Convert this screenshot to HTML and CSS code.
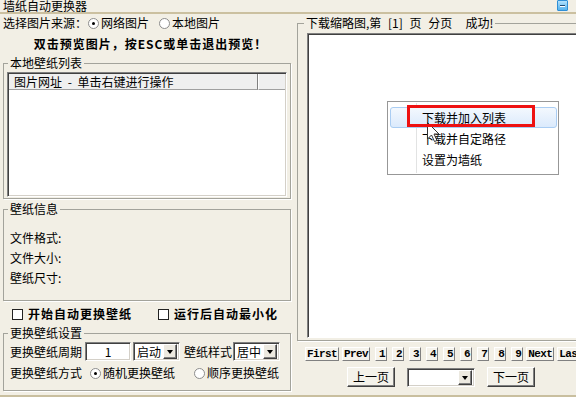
FILE: index.html
```html
<!DOCTYPE html>
<html lang="zh-CN">
<head>
    <meta charset="UTF-8">
    <title>墙纸自动更换器</title>
    <link rel="stylesheet" href="styles.css">
</head>
<body>
<div class="window">
    <div class="titlebar">
        <span class="title">墙纸自动更换器</span>
        <span class="min-btn"></span>
    </div>

    <div class="main">
        <div class="left">
            <div class="source-row">
                <span class="source-label">选择图片来源：</span>
                <span class="opt"><span class="radio on"></span>网络图片</span>
                <span class="opt"><span class="radio"></span>本地图片</span>
            </div>
            <div class="tip">双击预览图片，按ESC或单击退出预览！</div>

            <fieldset class="group list-group">
                <legend>本地壁纸列表</legend>
                <div class="listview">
                    <div class="list-head">
                        <div class="head-cell url-col">图片网址 - 单击右键进行操作</div>
                        <div class="head-cell"></div>
                    </div>
                </div>
            </fieldset>

            <fieldset class="group info-group">
                <legend>壁纸信息</legend>
                <p>文件格式:</p>
                <p>文件大小:</p>
                <p>壁纸尺寸:</p>
            </fieldset>

            <div class="check-row">
                <span class="check"><span class="box"></span>开始自动更换壁纸</span>
                <span class="check"><span class="box"></span>运行后自动最小化</span>
            </div>

            <fieldset class="group settings-group">
                <legend>更换壁纸设置</legend>
                <div class="set-row">
                    <span>更换壁纸周期</span>
                    <input class="period-input" type="text" value="1">
                    <span class="combo">启动<span class="drop"></span></span>
                    <span class="style-label">壁纸样式</span>
                    <span class="combo style-combo">居中<span class="drop"></span></span>
                </div>
                <div class="set-row">
                    <span>更换壁纸方式</span>
                    <span class="opt mode-opt"><span class="radio on"></span>随机更换壁纸</span>
                    <span class="opt mode-opt second"><span class="radio"></span>顺序更换壁纸</span>
                </div>
            </fieldset>
        </div>

        <div class="right">
            <fieldset class="group thumb-group">
                <legend>下载缩略图,第 [1] 页 分页  成功!</legend>
                <div class="thumb-view">
                    <div class="context-menu">
                        <div class="menu-item hover">下载并加入列表</div>
                        <div class="menu-item">下载并自定路径</div>
                        <div class="menu-item">设置为墙纸</div>
                        <div class="mark"></div>
                        <svg class="cursor" width="13" height="21" viewBox="0 0 13 21">
                            <path d="M0.5 0.5 V17 L4.5 13 L7.5 19.5 L10 18.5 L7 12 H12 Z" fill="#fff" stroke="#333" stroke-width="1"/>
                        </svg>
                    </div>
                </div>
            </fieldset>

            <div class="pager">
                <span>First</span>
                <span>Prev</span>
                <span class="num">1</span>
                <span class="num">2</span>
                <span class="num">3</span>
                <span class="num">4</span>
                <span class="num">5</span>
                <span class="num">6</span>
                <span class="num">7</span>
                <span class="num">8</span>
                <span class="num">9</span>
                <span>Next</span>
                <span>Last</span>
            </div>

            <div class="nav-row">
                <span class="nav-btn">上一页</span>
                <span class="nav-select"><span class="drop"></span></span>
                <span class="nav-btn">下一页</span>
            </div>
        </div>
    </div>
</div>
</body>
</html>
```

FILE: styles.css
```css
* {
    box-sizing: border-box;
}
body {
    margin: 0;
    font-family: "Noto Sans CJK SC", sans-serif;
    font-size: 12px;
    line-height: 12px;
    color: #000;
    background-color: #f2efe5;
}
.window {
    width: 576px;
    height: 397px;
    overflow: hidden;
    border-bottom: 2px solid #c9bf9f;
    display: flex;
    flex-direction: column;
}

/* title bar */
.titlebar {
    position: relative;
    height: 14px;
    padding-left: 3px;
    border-bottom: 2px solid #cbc0a0;
    flex-shrink: 0;
}
.titlebar .title {
    display: block;
}
.min-btn {
    position: absolute;
    left: 557px;
    top: 0;
    width: 11px;
    height: 11px;
    border: 1px solid #2f8fd6;
    border-radius: 1px;
    background: linear-gradient(#b3e1fb, #55b2ed);
}
.min-btn::after {
    content: "";
    position: absolute;
    left: 2px;
    top: 4px;
    width: 5px;
    height: 1px;
    background: #1f4a72;
    box-shadow: 0 1px #fff;
}

.main {
    display: flex;
    flex: 1;
    min-height: 0;
}
.left {
    width: 295px;
    flex-shrink: 0;
}
.right {
    flex: 1;
    overflow: hidden;
}

/* radios, checkboxes */
.opt {
    display: flex;
    align-items: center;
    gap: 2px;
}
.radio {
    position: relative;
    width: 11px;
    height: 11px;
    flex-shrink: 0;
    border: 1px solid #8d8d8d;
    border-radius: 50%;
    background: #fff;
}
.radio.on::after {
    content: "";
    position: absolute;
    left: 3px;
    top: 3px;
    width: 3px;
    height: 3px;
    border-radius: 50%;
    background: #000;
}
.box {
    width: 11px;
    height: 11px;
    flex-shrink: 0;
    border: 1px solid #222;
    background: #fff;
}

.source-row {
    display: flex;
    align-items: center;
    height: 12px;
    margin-top: 3px;
    padding-left: 3px;
}
.source-label {
    width: 85px;
}
.source-row .opt + .opt {
    margin-left: 10px;
}
.tip {
    margin-top: 9px;
    padding-left: 6px;
    text-align: center;
    font-weight: bold;
    letter-spacing: 1px;
}

/* group boxes */
.group {
    margin: 0 0 0 3px;
    width: 288px;
    min-width: 0;
    padding: 0 3px;
    border: 1px solid #a3a39b;
    box-shadow: 1px 1px 0 #fff;
}
.group legend {
    margin-left: 1px;
    padding: 0 2px;
    line-height: 12px;
}
.list-group {
    margin-top: 7px;
    padding-top: 3px;
    padding-bottom: 1px;
}
.listview {
    height: 125px;
    padding: 1px;
    background: #fff;
    border: 1px solid;
    border-color: #808080 #fff #fff #808080;
    box-shadow: inset 1px 1px #404040, inset -1px -1px #d4d0c8;
}
.list-head {
    display: flex;
    height: 16px;
}
.head-cell {
    flex: 1;
    padding-left: 5px;
    line-height: 15px;
    background: #efefef;
    border-bottom: 1px solid #a0a0a0;
    border-left: 1px solid #fff;
}
.head-cell.url-col {
    flex: none;
    width: 249px;
    border-left: 0;
    border-right: 1px solid #808080;
    word-spacing: 3px;
}

.info-group {
    margin-top: 4px;
    padding-top: 13px;
    padding-bottom: 12px;
}
.info-group p {
    margin: 0 0 0 3px;
    line-height: 20px;
}

.check-row {
    display: flex;
    align-items: center;
    height: 26px;
    padding-left: 12px;
    font-weight: bold;
    letter-spacing: 1px;
}
.check {
    display: flex;
    align-items: center;
    gap: 5px;
}
.check + .check {
    margin-left: 26px;
}

.settings-group {
    padding-top: 3px;
    padding-bottom: 8px;
}
.set-row {
    display: flex;
    align-items: center;
    height: 19px;
    padding-left: 3px;
}
.set-row + .set-row {
    height: 18px;
    margin-top: 3px;
}
.period-input {
    width: 46px;
    height: 19px;
    margin: 0 0 0 3px;
    padding: 0;
    font: inherit;
    text-align: center;
    background: #fff;
    border: 1px solid;
    border-color: #808080 #fff #fff #808080;
    box-shadow: inset 1px 1px #404040, inset -1px -1px #d4d0c8;
}
.combo {
    position: relative;
    display: flex;
    align-items: center;
    width: 47px;
    height: 19px;
    margin-left: 2px;
    padding-left: 3px;
    background: #fff;
    border: 1px solid;
    border-color: #808080 #fff #fff #808080;
    box-shadow: inset 1px 1px #404040, inset -1px -1px #d4d0c8;
}
.style-label {
    margin-left: 4px;
}
.combo.style-combo {
    margin-left: 1px;
}
.drop {
    position: absolute;
    right: 2px;
    top: 1px;
    width: 14px;
    height: 15px;
    background: #ece9e0;
    border: 1px solid;
    border-color: #fff #404040 #404040 #fff;
    box-shadow: inset -1px -1px #808080;
}
.drop::after {
    content: "";
    position: absolute;
    left: 3px;
    top: 5px;
    border-left: 3.5px solid transparent;
    border-right: 3.5px solid transparent;
    border-top: 4px solid #000;
}
.mode-opt {
    margin-left: 8px;
}
.mode-opt.second {
    margin-left: 19px;
}

/* right side */
.thumb-group {
    width: 300px;
    margin: 3px 0 0 2px;
    padding: 4px 0 2px 6px;
}
.thumb-group legend {
    margin-left: 0;
    white-space: pre;
    word-spacing: 4px;
}
.thumb-view {
    position: relative;
    height: 305px;
    margin-left: 3px;
    background: #fff;
    border: 1px solid;
    border-color: #808080 #fff #fff #808080;
    box-shadow: inset 1px 1px #404040;
}

.context-menu {
    position: absolute;
    left: 79px;
    top: 67px;
    width: 172px;
    height: 74px;
    padding-top: 5px;
    background: #fff;
    border: 1px solid #979797;
}
.context-menu::before {
    content: "";
    position: absolute;
    left: 28px;
    top: 1px;
    bottom: 1px;
    width: 1px;
    background: #e2e3e3;
    box-shadow: 1px 0 #fff;
}
.menu-item {
    position: relative;
    height: 21px;
    margin: 0 1px 0 2px;
    padding-left: 32px;
    line-height: 21px;
}
.menu-item.hover {
    line-height: 19px;
    padding-left: 31px;
    background: linear-gradient(#f3f8fe, #dbeafc);
    border: 1px solid #aacdf3;
    border-radius: 3px;
}
.mark {
    position: absolute;
    left: 19px;
    top: 3px;
    width: 128px;
    height: 22px;
    border: 3px solid #ee1111;
    z-index: 2;
}
.cursor {
    position: absolute;
    left: 39px;
    top: 20px;
    z-index: 1;
}

.pager {
    display: flex;
    gap: 3px;
    height: 14px;
    margin-top: 6px;
    padding-left: 10px;
}
.pager span {
    flex-shrink: 0;
    height: 14px;
    padding: 0 1px;
    font: bold 11px/12px "Liberation Mono", monospace;
    letter-spacing: -0.6px;
    background: #f5f3ec;
    border: 1px solid;
    border-color: #fff #808080 #808080 #fff;
}
.pager .num {
    padding: 0 1px 0 3px;
    margin-left: 2px;
}

.nav-row {
    display: flex;
    align-items: center;
    gap: 12px;
    margin-top: 6px;
    padding-left: 52px;
}
.nav-btn {
    width: 48px;
    height: 20px;
    line-height: 18px;
    text-align: center;
    background: #f4f2ea;
    border: 1px solid;
    border-color: #fff #404040 #404040 #fff;
    box-shadow: inset -1px -1px #808080;
}
.nav-select {
    position: relative;
    width: 68px;
    height: 19px;
    background: #fff;
    border: 1px solid;
    border-color: #808080 #fff #fff #808080;
    box-shadow: inset 1px 1px #404040, inset -1px -1px #d4d0c8;
}
```
